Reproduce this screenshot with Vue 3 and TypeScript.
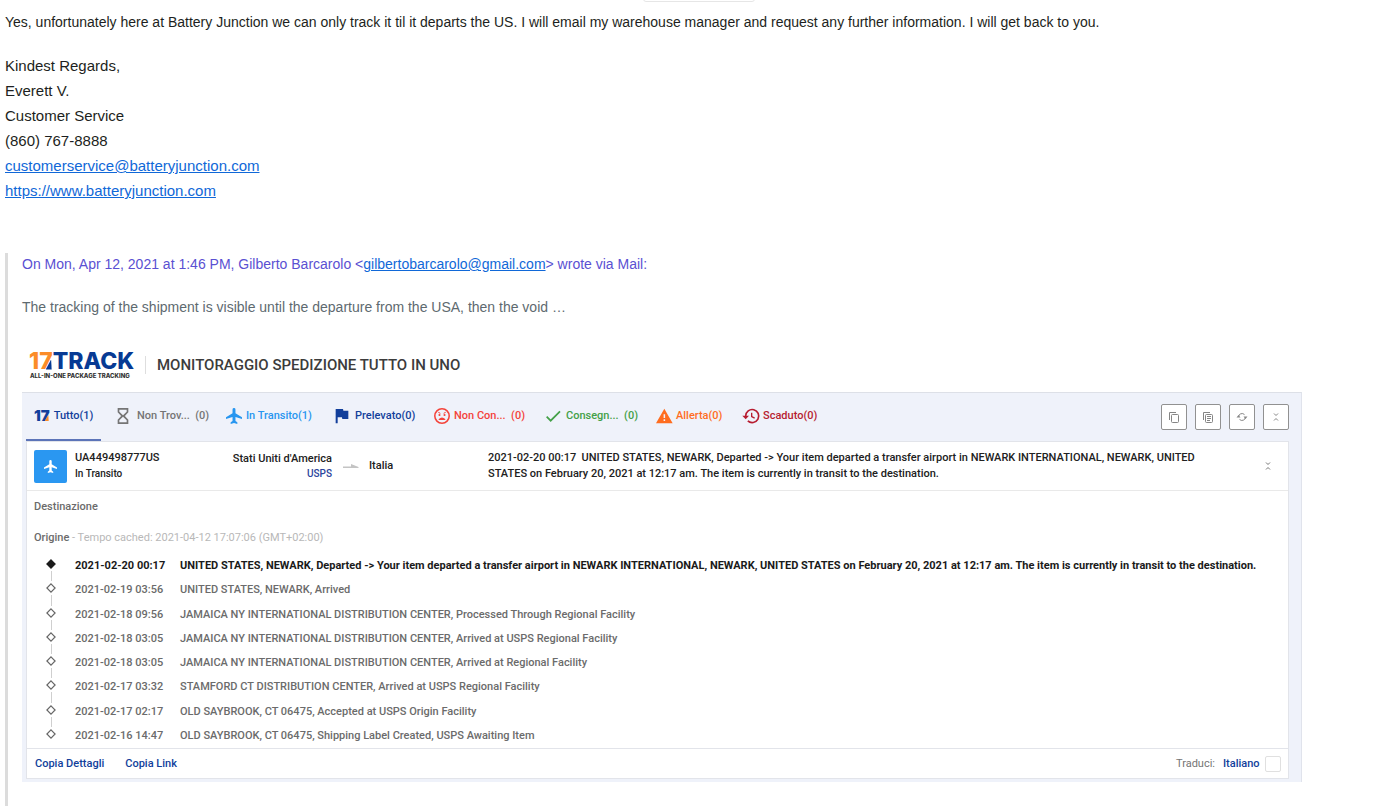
<script setup lang="ts">
import { ref } from 'vue'

interface Tab {
  id: string
  label: string
  icon: string
  tone: string
}

interface TrackEvent {
  time: string
  text: string
}

const tabs: Tab[] = [
  { id: 'all', label: 'Tutto(1)', icon: 'logo', tone: 'navy' },
  { id: 'notfound', label: 'Non Trov...\u00a0 (0)', icon: 'hourglass', tone: 'grey' },
  { id: 'transit', label: 'In Transito(1)', icon: 'plane', tone: 'sky' },
  { id: 'pickup', label: 'Prelevato(0)', icon: 'flag', tone: 'navy' },
  { id: 'undelivered', label: 'Non Con...\u00a0 (0)', icon: 'sad', tone: 'red' },
  { id: 'delivered', label: 'Consegn...\u00a0 (0)', icon: 'check', tone: 'green' },
  { id: 'alert', label: 'Allerta(0)', icon: 'alert', tone: 'orange' },
  { id: 'expired', label: 'Scaduto(0)', icon: 'history', tone: 'crimson' },
]

const activeTab = ref('all')
const language = ref('Italiano')
const translate = ref(false)

const departed =
  'UNITED STATES, NEWARK, Departed -> Your item departed a transfer airport in NEWARK INTERNATIONAL, NEWARK, UNITED STATES on February 20, 2021 at 12:17 am. The item is currently in transit to the destination.'

const events: TrackEvent[] = [
  { time: '2021-02-20 00:17', text: departed },
  { time: '2021-02-19 03:56', text: 'UNITED STATES, NEWARK, Arrived' },
  { time: '2021-02-18 09:56', text: 'JAMAICA NY INTERNATIONAL DISTRIBUTION CENTER, Processed Through Regional Facility' },
  { time: '2021-02-18 03:05', text: 'JAMAICA NY INTERNATIONAL DISTRIBUTION CENTER, Arrived at USPS Regional Facility' },
  { time: '2021-02-18 03:05', text: 'JAMAICA NY INTERNATIONAL DISTRIBUTION CENTER, Arrived at Regional Facility' },
  { time: '2021-02-17 03:32', text: 'STAMFORD CT DISTRIBUTION CENTER, Arrived at USPS Regional Facility' },
  { time: '2021-02-17 02:17', text: 'OLD SAYBROOK, CT 06475, Accepted at USPS Origin Facility' },
  { time: '2021-02-16 14:47', text: 'OLD SAYBROOK, CT 06475, Shipping Label Created, USPS Awaiting Item' },
]
</script>

<template>
  <main class="mail">
    <div class="flap" aria-hidden="true"></div>

    <section class="reply">
      <p class="answer">
        Yes, unfortunately here at Battery Junction we can only track it til it departs the US. I will email my
        warehouse manager and request any further information. I will get back to you.
      </p>
      <address class="signature">
        <span>Kindest Regards,</span>
        <span>Everett V.</span>
        <span>Customer Service</span>
        <span>(860) 767-8888</span>
        <a href="mailto:customerservice@batteryjunction.com">customerservice@batteryjunction.com</a>
        <a href="https://www.batteryjunction.com">https://www.batteryjunction.com</a>
      </address>
    </section>

    <blockquote class="quote">
      <p class="attribution">
        On Mon, Apr 12, 2021 at 1:46 PM, Gilberto Barcarolo &lt;<a href="mailto:gilbertobarcarolo@gmail.com">gilbertobarcarolo@gmail.com</a>&gt; wrote via Mail:
      </p>
      <p class="message">The tracking of the shipment is visible until the departure from the USA, then the void …</p>

      <article class="tracker">
        <header class="brand">
          <div class="logo">
            <div class="wordmark"><span class="seventeen">17</span><span>TRACK</span></div>
            <div class="tagline">ALL-IN-ONE PACKAGE TRACKING</div>
          </div>
          <h1>MONITORAGGIO SPEDIZIONE TUTTO IN UNO</h1>
        </header>

        <div class="panel">
          <div class="toolbar">
            <nav class="tabs">
              <button
                v-for="tab in tabs"
                :key="tab.id"
                type="button"
                :class="['tab', tab.tone, { active: tab.id === activeTab }]"
                @click="activeTab = tab.id"
              >
                <span v-if="tab.icon === 'logo'" class="mini">17</span>
                <svg v-else class="icon" viewBox="0 0 24 24" fill="currentColor" aria-hidden="true">
                  <path
                    v-if="tab.icon === 'hourglass'"
                    fill-rule="evenodd"
                    d="M1 0h16v6.500L11.800 12l5.200 5.500V24H1v-6.500L6.200 12 1 6.500zM3.500 2.500v3L9 11l5.500-5.500v-3zM9 13l-5.500 5.500v3h11v-3z"
                  />
                  <path
                    v-else-if="tab.icon === 'plane'"
                    d="M24 16.500v-2.600L14.200 8V2.300a2.200 2.200 0 0 0-4.400 0V8L0 13.900v2.600l9.800-3v6L7 21.500V24l5-1.500 5 1.500v-2.500l-2.800-2v-6z"
                  />
                  <path v-else-if="tab.icon === 'flag'" d="M1 1.500h11l.6 2.500H20v12.500h-9l-.6-2.500H4V23H1z" />
                  <g v-else-if="tab.icon === 'sad'">
                    <circle cx="12" cy="12" r="10.800" fill="none" stroke="currentColor" stroke-width="2.300" />
                    <circle cx="8.200" cy="10.500" r="1.600" />
                    <circle cx="15.800" cy="10.500" r="1.600" />
                    <path d="M6.500 6.500l3 1.500M17.500 6.500l-3 1.500" stroke="currentColor" stroke-width="1.500" />
                    <path d="M6.500 18a5.900 5.900 0 0 1 11 0z" />
                  </g>
                  <path
                    v-else-if="tab.icon === 'check'"
                    d="M1 13l6 6L21 5"
                    fill="none"
                    stroke="currentColor"
                    stroke-width="2.600"
                  />
                  <path
                    v-else-if="tab.icon === 'alert'"
                    fill-rule="evenodd"
                    d="M12.500 1L25 23H0zM11.400 9.500v5.500h2.300V9.500zm0 7.500v2.500h2.300V17z"
                  />
                  <g v-else fill="none" stroke="currentColor" stroke-width="2.500">
                    <path d="M4 12a9.800 9.800 0 1 1 3.200 7.300" />
                    <path d="M13 7v5.800l4.500 2.500" stroke-width="2" />
                    <path d="M-1 11.500h10L4 17z" fill="currentColor" stroke="none" />
                  </g>
                </svg>
                <span>{{ tab.label }}</span>
              </button>
            </nav>

            <div class="actions">
              <button type="button" aria-label="Copia">
                <svg viewBox="0 0 12 12" fill="none" stroke="currentColor" aria-hidden="true">
                  <path d="M1.500 9V1.500H8" />
                  <rect x="3.500" y="3.500" width="7" height="8" rx="1" />
                </svg>
              </button>
              <button type="button" aria-label="Copia dettagli">
                <svg viewBox="0 0 12 12" fill="none" stroke="currentColor" aria-hidden="true">
                  <path d="M1.500 9V1.500H8" />
                  <rect x="3.500" y="3.500" width="7" height="8" rx="1" />
                  <path d="M5 5.500h4M5 7.500h4M5 9.500h3" />
                </svg>
              </button>
              <button type="button" aria-label="Aggiorna">
                <svg viewBox="0 0 12 12" fill="none" stroke="currentColor" aria-hidden="true">
                  <path d="M2.500 6A3.500 3.500 0 0 1 8.500 3.600M9.500 6A3.500 3.500 0 0 1 3.500 8.400" />
                  <path d="M.5 6.500h4L2.500 4zM7.500 5.500h4L9.500 8z" fill="currentColor" stroke="none" />
                </svg>
              </button>
              <button type="button" aria-label="Comprimi tutto">
                <svg viewBox="0 0 12 12" fill="none" stroke="currentColor" aria-hidden="true">
                  <path d="M4 2.500L6 4.500 8 2.500M4 9.500L6 7.500 8 9.500" />
                </svg>
              </button>
            </div>
          </div>

          <section class="card">
            <header class="summary">
              <div class="badge">
                <svg viewBox="0 0 24 24" fill="currentColor" aria-hidden="true">
                  <path d="M24 16.500v-2.600L14.200 8V2.300a2.200 2.200 0 0 0-4.400 0V8L0 13.900v2.600l9.800-3v6L7 21.500V24l5-1.500 5 1.500v-2.500l-2.800-2v-6z" />
                </svg>
              </div>
              <div class="parcel">
                <div>UA449498777US</div>
                <div class="state">In Transito</div>
              </div>
              <div class="origin">
                <div>Stati Uniti d'America</div>
                <div class="carrier">USPS</div>
              </div>
              <svg class="route" viewBox="0 0 16 6" aria-hidden="true">
                <path d="M0 3.500h8V1l7.500 3v1H0z" fill="#c4c4c4" />
              </svg>
              <div class="country">Italia</div>
              <p class="latest">2021-02-20 00:17&nbsp; {{ departed }}</p>
              <button type="button" class="collapse" aria-label="Comprimi">
                <svg viewBox="0 0 12 12" fill="none" stroke="currentColor" aria-hidden="true">
                  <path d="M4 2.500L6 4.500 8 2.500M4 9.500L6 7.500 8 9.500" />
                </svg>
              </button>
            </header>

            <div class="details">
              <p class="place">Destinazione</p>
              <p class="place">Origine <span class="cached">- Tempo cached: 2021-04-12 17:07:06 (GMT+02:00)</span></p>
              <ol class="timeline">
                <li v-for="(event, index) in events" :key="index" :class="{ current: index === 0 }">
                  <span class="marker">
                    <svg viewBox="0 0 10 10" aria-hidden="true"><path d="M5 .9L9.100 5 5 9.100.9 5z" /></svg>
                  </span>
                  <time>{{ event.time }}</time>
                  <span>{{ event.text }}</span>
                </li>
              </ol>
            </div>

            <footer class="foot">
              <button type="button">Copia Dettagli</button>
              <button type="button">Copia Link</button>
              <div class="translate">
                <label for="language">Traduci:</label>
                <select id="language" v-model="language">
                  <option>Italiano</option>
                </select>
                <input v-model="translate" type="checkbox" aria-label="Traduci" />
              </div>
            </footer>
          </section>
        </div>
      </article>
    </blockquote>
  </main>
</template>

<style>
body {
  margin: 0;
  background: #fff;
}
</style>

<style scoped>
.mail {
  position: relative;
  min-height: 100vh;
  box-sizing: border-box;
  padding: 10px 5px 0;
  display: flex;
  flex-direction: column;
  overflow: hidden;
  font-family: 'Liberation Sans', Arial, sans-serif;
  color: #1d1f21;
}
p,
h1,
ol,
blockquote {
  margin: 0;
  padding: 0;
}
button,
select {
  font: inherit;
  color: inherit;
  border: 0;
  padding: 0;
  background: none;
  cursor: pointer;
}
a {
  color: #1068d8;
}
.flap {
  position: absolute;
  top: -8px;
  left: 643px;
  width: 110px;
  height: 8px;
  border: 1px solid #e6e6e6;
  border-radius: 3px;
}
.reply {
  font-size: 15px;
  line-height: 25px;
}
.answer {
  font-size: 14px;
}
.signature {
  display: flex;
  flex-direction: column;
  align-items: flex-start;
  margin: 18px 0 50px;
  font-style: normal;
}
.quote {
  flex: 1;
  box-sizing: border-box;
  border-left: 3px solid #dcdcdc;
  padding: 0 69px 25px 14px;
  font-size: 14px;
  line-height: 23px;
}
.attribution {
  color: #5a50d2;
}
.message {
  margin-top: 20px;
  color: #5e6a70;
}
.tracker {
  margin-top: 20px;
  font-family: Roboto, 'Liberation Sans', sans-serif;
  font-size: 11px;
  line-height: 16px;
  font-weight: 500;
}
.brand {
  display: flex;
  align-items: center;
  height: 33px;
  padding: 9px 0 11px 7px;
}
.logo {
  width: 116px;
  white-space: nowrap;
}
.wordmark {
  font-family: Inter, sans-serif;
  font-weight: 800;
  font-size: 23px;
  line-height: 22px;
  color: #073a94;
}
.seventeen,
.mini {
  position: relative;
}
.seventeen {
  color: #fb8c28;
}
.seventeen::after,
.mini::after {
  content: '';
  position: absolute;
  right: 1px;
  clip-path: polygon(90% 0, 100% 100%, 0 100%);
}
.seventeen::after {
  bottom: 5px;
  width: 6px;
  height: 10px;
  background: #073a94;
}
.mini::after {
  bottom: 3px;
  width: 4px;
  height: 6px;
  background: #fb8c28;
}
.tagline {
  padding-left: 1px;
  font-family: Inter, sans-serif;
  font-size: 6px;
  line-height: 8px;
  font-weight: 800;
  color: #333;
}
h1 {
  padding-left: 11px;
  border-left: 1px solid #dedede;
  font-size: 15px;
  line-height: 18px;
  font-weight: 500;
  color: #3c3c3c;
}
.panel {
  padding: 0 12px 3px 4px;
  background: #eff2fa;
  border-top: 1px solid #dde0e7;
  border-right: 1px solid #e0e3ec;
}
.toolbar {
  display: flex;
  justify-content: space-between;
  align-items: center;
  height: 48px;
}
.tabs {
  align-self: stretch;
  display: grid;
  grid-template-columns: 83px 109px 109px 99px 112px 110px 87px auto;
  justify-items: start;
}
.tab {
  display: flex;
  align-items: center;
  gap: 4px;
  padding: 0 8px;
  border-bottom: 2px solid transparent;
  white-space: nowrap;
}
.tab.active {
  border-bottom-color: #5c74b8;
}
.icon {
  width: 16px;
  height: 16px;
  overflow: visible;
}
.mini {
  font-family: Inter, sans-serif;
  font-weight: 900;
  font-size: 15px;
}
.navy {
  color: #123f9b;
}
.grey {
  color: #757575;
}
.sky {
  color: #2796f0;
}
.red {
  color: #f4433a;
}
.green {
  color: #43a047;
}
.orange {
  color: #ff6d1f;
}
.crimson {
  color: #b71c30;
}
.actions {
  display: flex;
  gap: 8px;
}
.actions button {
  display: grid;
  place-items: center;
  width: 26px;
  height: 26px;
  box-sizing: border-box;
  border: 1px solid #919191;
  border-radius: 2px;
  background: #fff;
  color: #858585;
}
.actions svg,
.collapse svg {
  width: 12px;
  height: 12px;
}
.card {
  background: #fff;
  border: 1px solid #e2e4ea;
}
.summary {
  display: flex;
  align-items: center;
  height: 48px;
  padding: 0 14px 0 7px;
  border-bottom: 1px solid #e9e9e9;
  color: #212121;
}
.badge {
  display: grid;
  place-items: center;
  width: 33px;
  height: 33px;
  border-radius: 2px;
  background: #2a97f1;
  color: #fff;
}
.badge svg {
  width: 13px;
  height: 13px;
}
.parcel {
  width: 140px;
  margin-left: 8px;
}
.state,
.carrier {
  font-size: 10px;
}
.origin {
  width: 117px;
  text-align: right;
  white-space: nowrap;
}
.carrier {
  line-height: 14px;
  color: #2b449c;
}
.route {
  width: 16px;
  height: 6px;
  margin: 0 10px 0 11px;
}
.country {
  width: 119px;
}
.latest {
  flex: 0 1 730px;
}
.collapse {
  display: grid;
  margin-left: auto;
  color: #757575;
}
.details {
  padding: 8px 0 0 7px;
  color: #6b6b6b;
}
.place {
  height: 16px;
  margin-bottom: 15px;
}
.place + .place {
  margin-bottom: 12px;
}
.cached {
  color: #b8b8b8;
  font-weight: 400;
}
.timeline {
  display: grid;
  grid-template-rows: repeat(7, 1fr) 20px;
  height: 190px;
  list-style: none;
}
.timeline li {
  display: grid;
  grid-template-columns: 33px 105px 1fr;
  margin-left: 8px;
  white-space: nowrap;
}
.marker {
  display: flex;
  flex-direction: column;
  gap: 2px;
  width: 18px;
  align-items: center;
}
.marker svg {
  width: 10px;
  height: 10px;
  margin-top: 1px;
  fill: #fff;
  stroke: #666;
  stroke-width: 1.2;
}
.marker::after {
  content: '';
  flex: 1;
  width: 1px;
  background: #cfcfcf;
  margin-bottom: 1px;
}
.timeline li:last-child .marker::after {
  background: none;
}
.current {
  color: #1a1a1a;
  font-weight: 700;
}
.current .marker svg {
  fill: #1a1a1a;
  stroke: #1a1a1a;
}
.foot {
  display: flex;
  align-items: center;
  gap: 21px;
  height: 29px;
  padding: 0 7px 0 8px;
  border-top: 1px solid #e2e4ea;
  color: #123f9b;
}
.translate {
  display: flex;
  align-items: center;
  gap: 5px;
  margin-left: auto;
}
.translate label {
  margin-right: 3px;
  color: #757575;
  font-weight: 400;
}
.translate select {
  appearance: none;
}
.translate input {
  appearance: none;
  width: 16px;
  height: 16px;
  margin: 0;
  border: 1px solid #e0e0e0;
  border-radius: 2px;
}
</style>
